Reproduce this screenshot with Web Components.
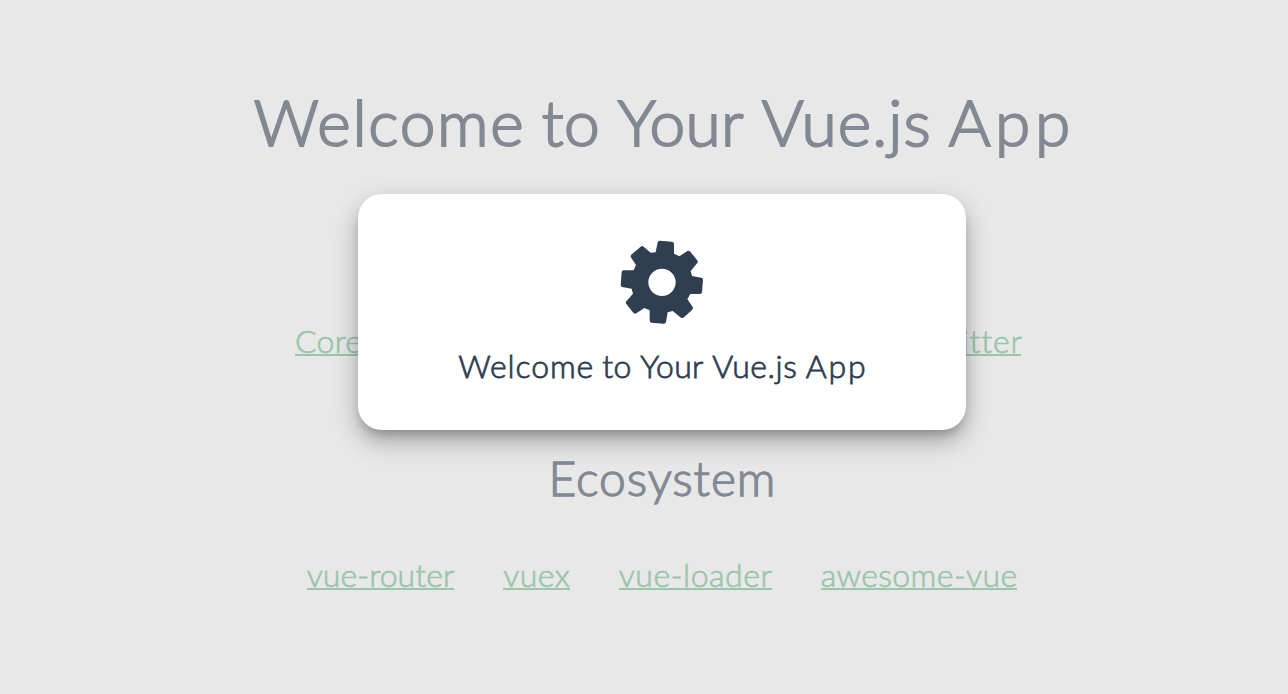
<!DOCTYPE html>
<html lang="en">
<head>
<meta charset="utf-8">
<title>Welcome to Your Vue.js App</title>
<style>
html, body { margin: 0; height: 100%; overflow: hidden; background: #e8e8e8; }
body { font-family: Lato, "Open Sans", sans-serif; color: #828993; }
</style>
</head>
<body>
<welcome-page></welcome-page>
<script>
// A word whose tracking is adjusted so that it fills the advance width "w".
class TrackedWord extends HTMLElement {
  connectedCallback() {
    const root = this.attachShadow({ mode: 'open' });
    root.innerHTML = '<style>:host{display:inline-block;white-space:nowrap}span{display:inline-block}</style><span><slot></slot></span>';
    const w = parseFloat(this.getAttribute('w'));
    const span = root.querySelector('span');
    const n = this.textContent.length;
    const natural = span.getBoundingClientRect().width;
    span.style.letterSpacing = ((w - natural) / (n - 1)).toFixed(3) + 'px';
    this.style.width = w + 'px';
  }
}

class PageLink extends HTMLElement {
  connectedCallback() {
    this.attachShadow({ mode: 'open' }).innerHTML = `
      <style>
        :host { display: block; }
        a { display: block; height: 28px; line-height: 29px; color: #9bc6ab; font-size: 32px; font-weight: 300;
            text-decoration: none; border-bottom: 2px solid #9bc6ab; white-space: nowrap; -webkit-text-stroke: .7px #9bc6ab; }
      </style>
      <a><slot></slot></a>`;
  }
}

class LinkRow extends HTMLElement {
  connectedCallback() {
    this.attachShadow({ mode: 'open' }).innerHTML = `
      <style>:host { display: flex; justify-content: center; gap: 49px; }</style><slot></slot>`;
  }
}

class GearIcon extends HTMLElement {
  connectedCallback() {
    this.attachShadow({ mode: 'open' }).innerHTML = `
      <style>:host, svg { display: block; width: 84px; height: 84px; }</style>
      <svg viewBox="60 45 252 252" fill="#2f3e50" aria-hidden="true">
        <path fill-rule="evenodd" d="M167 82L173 52Q174 47 179 47L216 50Q222 51 222 56V86L238 94L262 78Q267 76 271 80L291 105Q295 110 292 114L272 138L276 153L304 158Q309 159 309 164L306 202Q305 207 300 207H271L262 222L278 246Q280 251 276 255L250 278Q245 281 241 277L218 258L203 262L198 291Q197 296 191 296L154 293Q149 292 149 286V256L133 249L109 265Q104 267 100 263L79 237Q76 233 79 229L99 206L95 191L66 186Q62 185 62 180L65 141Q66 136 71 136H101L108 120L92 96Q91 92 94 89L122 65Q127 61 131 65L152 83Z
        M227 172A41 41 0 1 0 145 172A41 41 0 1 0 227 172Z"/>
      </svg>`;
  }
}

class LoadingDialog extends HTMLElement {
  connectedCallback() {
    this.attachShadow({ mode: 'open' }).innerHTML = `
      <style>
        :host { display: flex; flex-direction: column; align-items: center; box-sizing: border-box;
                width: 608px; height: 236px; padding-top: 46px; border-radius: 24px; background: #fff;
                box-shadow: 0 7px 10px -3px rgba(0,0,0,.18), 0 11px 24px rgba(0,0,0,.3); color: #2f3e50; }
        p { display: flex; gap: 9px; margin: 22px 0 0; font-size: 32px; line-height: 40px; font-weight: 300; -webkit-text-stroke: .8px #2f3e50; }
      </style>
      <gear-icon></gear-icon>
      <p><slot></slot></p>`;
  }
}

class WelcomePage extends HTMLElement {
  connectedCallback() {
    this.attachShadow({ mode: 'open' }).innerHTML = `
      <style>
        :host { display: block; box-sizing: border-box; position: relative; height: 694px; padding: 82px 0 0 36px; }
        h1, h2 { margin: 0; display: flex; justify-content: center; font-weight: 300; }
        h1 { height: 80px; line-height: 80px; font-size: 64px; gap: 18px; -webkit-text-stroke: 2px #828993; }
        h2 { height: 60px; line-height: 60px; font-size: 48px; -webkit-text-stroke: 1.3px #828993; }
        .first { width: 726px; margin: 164px 0 0 259px; justify-content: space-between; }
        .eco { margin-top: 92px; }
        .second { margin-top: 52px; }
        loading-dialog { position: absolute; top: 194px; left: 358px; }
      </style>
      <h1><tracked-word w="270">Welcome</tracked-word> <tracked-word w="58">to</tracked-word> <tracked-word w="126">Your</tracked-word> <tracked-word w="169">Vue.js</tracked-word> <tracked-word w="121.5">App</tracked-word></h1>
      <link-row class="first">
        <page-link><tracked-word w="67">Core</tracked-word></page-link>
        <page-link><tracked-word w="101">Twitter</tracked-word></page-link>
      </link-row>
      <h2 class="eco"><tracked-word w="227">Ecosystem</tracked-word></h2>
      <link-row class="second">
        <page-link><tracked-word w="147.5">vue-router</tracked-word></page-link>
        <page-link><tracked-word w="66.5">vuex</tracked-word></page-link>
        <page-link><tracked-word w="153">vue-loader</tracked-word></page-link>
        <page-link><tracked-word w="196.5">awesome-vue</tracked-word></page-link>
      </link-row>
      <loading-dialog><tracked-word w="135">Welcome</tracked-word> <tracked-word w="29">to</tracked-word> <tracked-word w="63">Your</tracked-word> <tracked-word w="84.5">Vue.js</tracked-word> <tracked-word w="60">App</tracked-word></loading-dialog>`;
  }
}

customElements.define('link-row', LinkRow);
customElements.define('page-link', PageLink);
customElements.define('gear-icon', GearIcon);
customElements.define('loading-dialog', LoadingDialog);
customElements.define('welcome-page', WelcomePage);
customElements.define('tracked-word', TrackedWord);
</script>
</body>
</html>
